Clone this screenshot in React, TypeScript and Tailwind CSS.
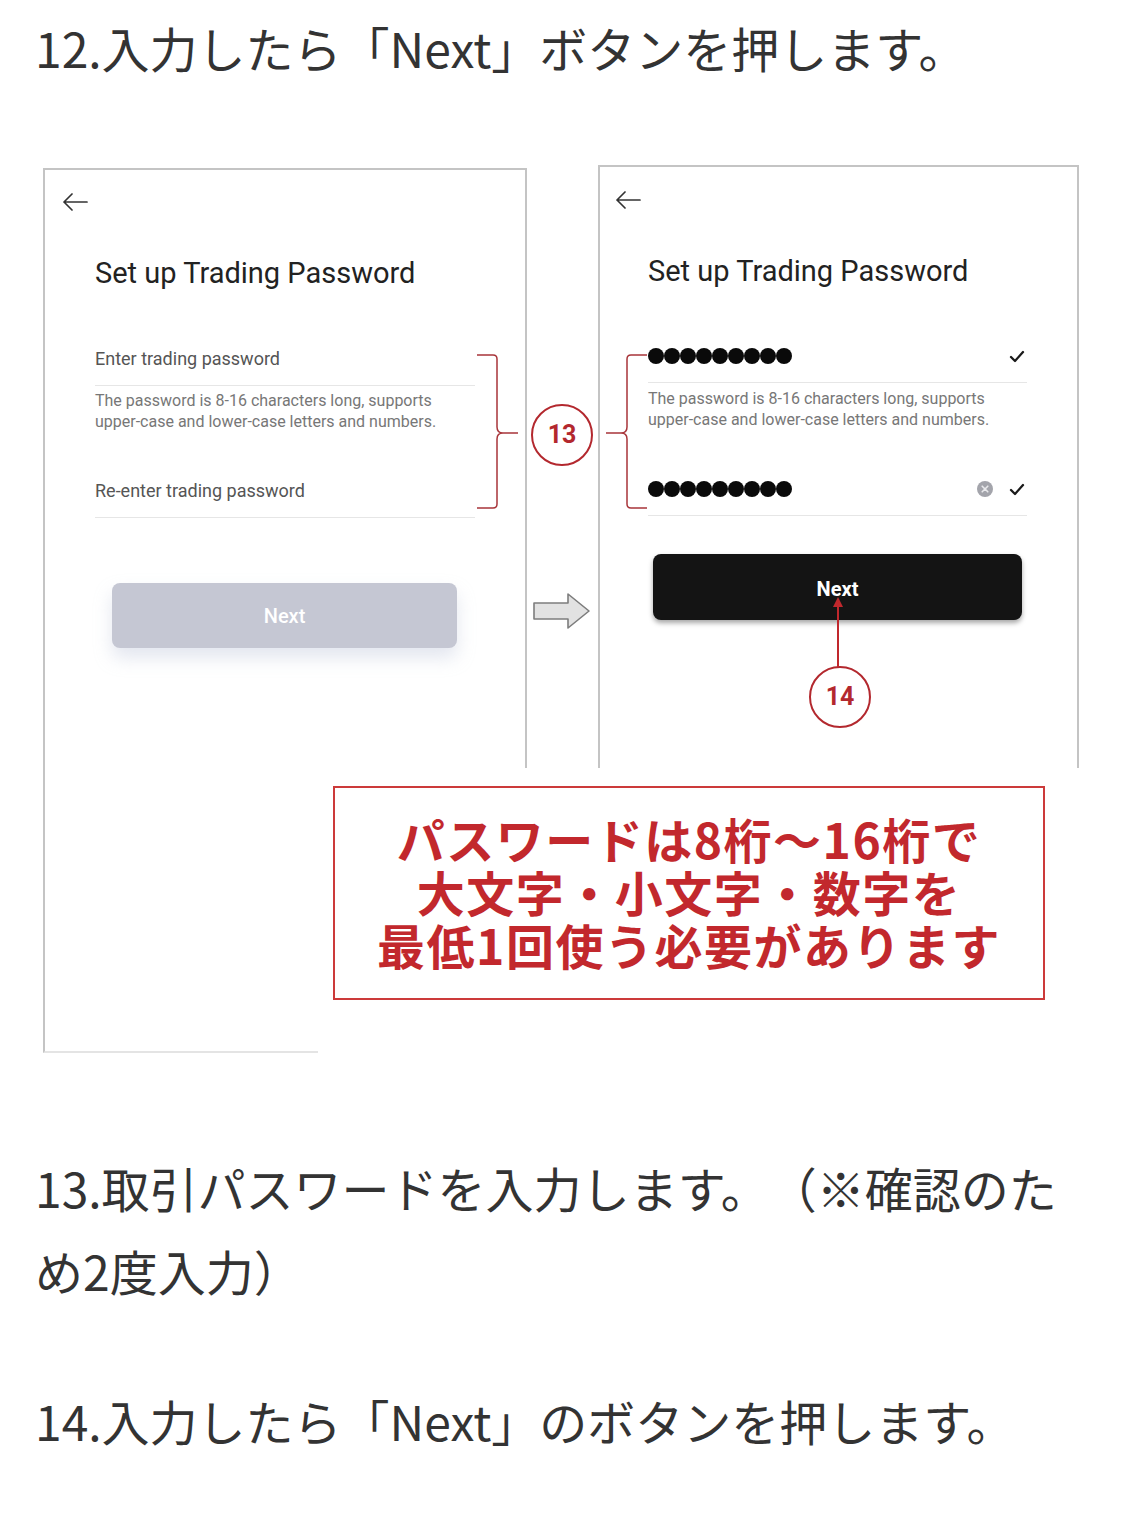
import React from 'react';

const jp = "font-['Noto_Sans_CJK_JP','Noto_Sans',sans-serif]";
const ui = "font-['Roboto','Noto_Sans',sans-serif]";

function BackArrow() {
  return (
    <svg width="27" height="18" viewBox="0 0 27 18" className="block" fill="none" stroke="#333" strokeWidth="1.7" strokeLinecap="round" strokeLinejoin="round">
      <path d="M25 9H2M10 1L2 9l8 8" />
    </svg>
  );
}

function Check() {
  return (
    <svg width="16" height="13" viewBox="0 0 16 13" className="block" fill="none" stroke="#1a1a1a" strokeWidth="2.3" strokeLinecap="round" strokeLinejoin="round">
      <path d="M2 7l4 4 8-9" />
    </svg>
  );
}

function ClearIcon() {
  return (
    <svg width="16" height="16" viewBox="0 0 16 16" className="block">
      <circle cx="8" cy="8" r="8" fill="#a3a4ab" />
      <path d="M5.2 5.2l5.6 5.6M10.8 5.2l-5.6 5.6" stroke="#e9e9ec" strokeWidth="1.6" strokeLinecap="round" />
    </svg>
  );
}

function Dots() {
  return (
    <div className="flex gap-[0.5px]">
      {Array.from({ length: 9 }, (_, i) => (
        <span key={i} className="block w-[15.5px] h-[15.5px] rounded-full bg-[#0a0a0a]" />
      ))}
    </div>
  );
}

function Hint() {
  return (
    <p className="text-[16px] leading-[21px] text-[#777]">
      The password is 8-16 characters long, supports
      <br />
      upper-case and lower-case letters and numbers.
    </p>
  );
}

function StepCircle({ label }: { label: string }) {
  return (
    <div className={`${ui} w-[62px] h-[62px] rounded-full border-[2.5px] border-[#b3282e] bg-white flex items-center justify-center text-[25px] font-bold text-[#b3282e]`}>
      {label}
    </div>
  );
}

function LeftPanel() {
  return (
    <div className={`${ui} ml-[43px] mt-[3px] w-[484px] h-[885px] shrink-0 border-2 border-[#c4c4c4] border-b-[#e4e4e4] pt-[23px]`}>
      <div className="pl-[17px]">
        <BackArrow />
      </div>
      <div className="pl-[50px] w-[430px]">
        <h2 className="mt-[45px] text-[29px] leading-[34px] text-[#222]">Set up Trading Password</h2>
        <div className="mt-[56px] pb-[13px] border-b border-[#e6e6e6] text-[18px] leading-[26px] text-[#555]">
          Enter trading password
        </div>
        <div className="mt-[4px]">
          <Hint />
        </div>
        <div className="mt-[46px] pb-[13px] border-b border-[#e6e6e6] text-[18px] leading-[26px] text-[#555]">
          Re-enter trading password
        </div>
        <button className="mt-[65px] ml-[17px] w-[345px] h-[65px] rounded-[8px] bg-[#c5c7d3] text-white text-[20px] font-medium shadow-[0_10px_18px_rgba(175,182,210,0.35)]">
          Next
        </button>
      </div>
    </div>
  );
}

function RightPanel() {
  return (
    <div className={`${ui} ml-[71px] w-[481px] h-[650px] shrink-0 border-2 border-[#c4c4c4] pt-[24px]`}>
      <div className="pl-[15px]">
        <BackArrow />
      </div>
      <div className="pl-[48px] w-[427px] flex flex-col">
        <h2 className="mt-[45px] text-[29px] leading-[34px] text-[#222]">Set up Trading Password</h2>
        <div className="mt-[55px] pb-[13px] border-b border-[#e6e6e6] h-[40px] flex items-start">
          <div className="h-[26px] flex items-center justify-between w-full pr-[2px]">
            <Dots />
            <Check />
          </div>
        </div>
        <div className="mt-[5px]">
          <Hint />
        </div>
        <div className="mt-[46px] pb-[13px] border-b border-[#e6e6e6] h-[40px] flex items-start">
          <div className="h-[26px] flex items-center w-full pr-[2px]">
            <Dots />
            <div className="ml-auto flex items-center gap-[16px]">
              <ClearIcon />
              <Check />
            </div>
          </div>
        </div>
        <button className="mt-[38px] ml-[5px] w-[369px] h-[66px] rounded-[8px] bg-[#141414] pt-[3px] text-white text-[20px] font-bold shadow-[0_3px_5px_rgba(0,0,0,0.35)]">
          Next
        </button>
        <div className="mt-[46px] ml-[161px] self-start">
          <StepCircle label="14" />
        </div>
      </div>
    </div>
  );
}

function Figure() {
  return (
    <div className="relative mt-[76px] h-[890px]">
      <div className="flex items-start">
        <LeftPanel />
        <RightPanel />
      </div>

      {/* bracket for left screen */}
      <svg className="absolute left-[475px] top-[188px]" width="45" height="158" viewBox="0 0 45 158" fill="none" stroke="#a8353a" strokeWidth="1.5">
        <path d="M2 2H18Q22 2 22 6V74Q22 80 28 80H43M28 80Q22 80 22 86V151Q22 155 18 155H2" />
      </svg>
      <div className="absolute left-[531px] top-[239px]">
        <StepCircle label="13" />
      </div>
      {/* bracket for right screen */}
      <svg className="absolute left-[605px] top-[188px]" width="45" height="158" viewBox="0 0 45 158" fill="none" stroke="#a8353a" strokeWidth="1.5">
        <path d="M42 2H26Q22 2 22 6V74Q22 80 16 80H1M16 80Q22 80 22 86V151Q22 155 26 155H42" />
      </svg>

      {/* grey transition arrow */}
      <svg className="absolute left-[532px] top-[427px]" width="60" height="38" viewBox="0 0 60 38">
        <path d="M2 11H36V2L57 19L36 36V27H2Z" fill="#e2e2e2" stroke="#7d7d7d" strokeWidth="1.6" strokeLinejoin="round" />
      </svg>

      {/* red pointer to the Next button */}
      <svg className="absolute left-[832px] top-[432px]" width="12" height="70" viewBox="0 0 12 70">
        <path d="M6 8V70" stroke="#c0282d" strokeWidth="2" />
        <path d="M6 0L1 10H11Z" fill="#c0282d" />
      </svg>

      {/* note box */}
      <div className="absolute left-[318px] top-[603px] w-[782px] h-[287px] bg-white">
        <div className={`${jp} ml-[15px] mt-[18px] w-[712px] h-[214px] border-2 border-[#cc3a3a] pt-[24px] flex flex-col items-center text-[48px] leading-[53px] tracking-[1.5px] font-bold text-[#c2282d] [text-spacing-trim:space-all]`}>
          <p>パスワードは8桁～16桁で</p>
          <p>大文字・小文字・数字を</p>
          <p>最低1回使う必要があります</p>
        </div>
      </div>
    </div>
  );
}

export default function App() {
  return (
    <div className={`${jp} w-[1125px] min-h-[1515px] bg-white text-[#333] [text-spacing-trim:space-all]`}>
      <p className="px-[35px] pt-[6px] text-[48px] leading-[83px]">12.入力したら「Next」ボタンを押します。</p>
      <Figure />
      <p className="mt-[91px] px-[35px] text-[48px] leading-[83px]">13.取引パスワードを入力します。（※確認のため2度入力）</p>
      <p className="mt-[67px] px-[35px] text-[48px] leading-[83px]">14.入力したら「Next」のボタンを押します。</p>
    </div>
  );
}
